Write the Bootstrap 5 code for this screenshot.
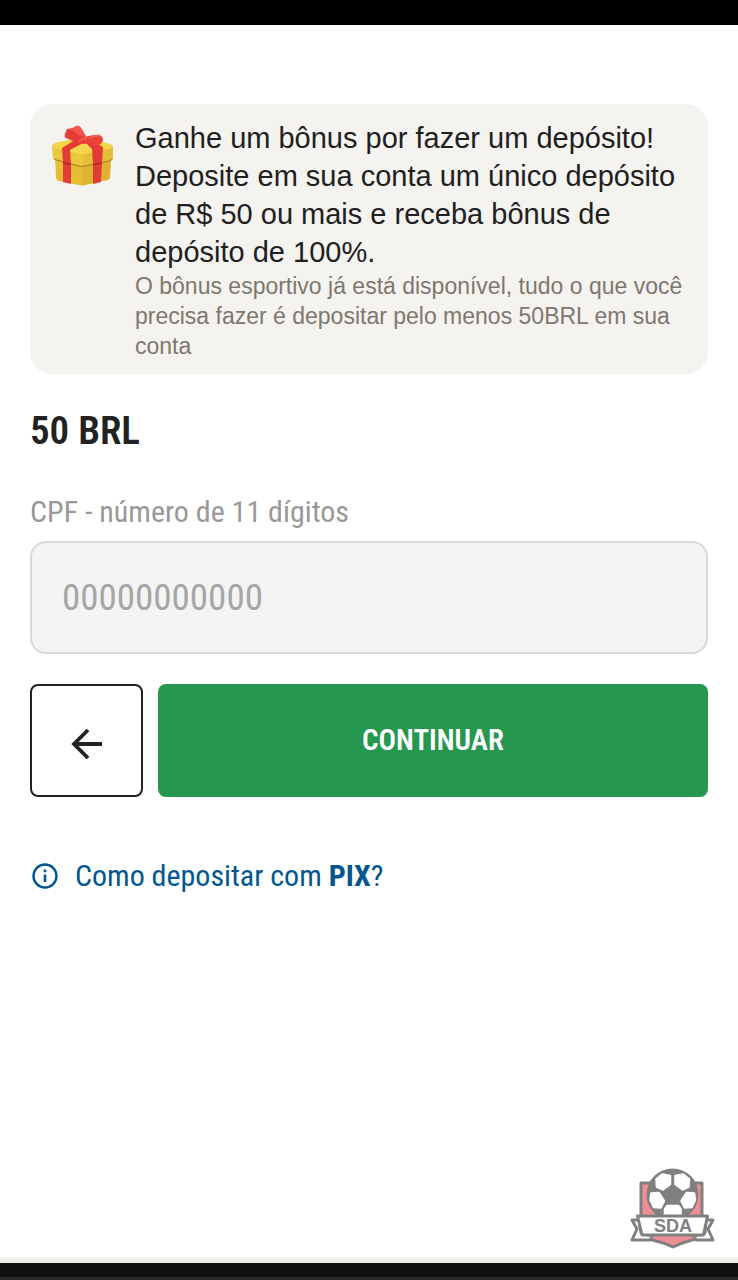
<!DOCTYPE html>
<html lang="pt-BR">
<head>
<meta charset="utf-8">
<meta name="viewport" content="width=device-width, initial-scale=1">
<title>Depósito com PIX</title>
<link rel="stylesheet" href="https://cdn.jsdelivr.net/npm/bootstrap@5.3.0/dist/css/bootstrap.min.css">
<style>
  body { background: #fff; color: #222; font-family: "Roboto Condensed", "Liberation Sans Narrow", Roboto, sans-serif; }
  .top-bar { height: 25px; background: #000; }
  .page-main { padding: 79px 30px 0; }
  .bonus { background: #f4f3f0; border-radius: 22px; padding: 15px 16px 13px 21px; gap: 20px; font-family: "Liberation Sans", Arial, sans-serif; }
  .bonus-icon { width: 64px; height: 64px; margin-top: 5px; }
  .bonus-title { font-size: 29px; line-height: 38px; color: #22201e; }
  .bonus-text { font-size: 23px; line-height: 30px; color: #7f776e; }
  .amount { font-size: 39px; line-height: 48px; font-weight: 600; margin: 33px 0 37px; }
  .cpf-label { font-size: 30px; line-height: 40px; color: #999; margin-bottom: 9px; }
  .cpf-input, .cpf-input:focus { height: 113px; border: 2px solid #d9d9d9; border-radius: 16px; background: #f4f4f4; font-size: 37px; padding: 0 30px; }
  .cpf-input::placeholder { color: #a6a6a6; }
  .actions { gap: 15px; margin-top: 30px; }
  .btn-back { width: 113px; height: 113px; border: 2px solid #222; border-radius: 8px; color: #222; }
  .btn-go { background: #26974f; color: #fff; border: 0; border-radius: 8px; font-size: 29px; line-height: 40px; font-weight: 600; padding-bottom: 8px; }
  .btn-go:hover { background: #1f8444; color: #fff; }
  .help { color: #005792; font-size: 30px; line-height: 40px; gap: 16px; margin-top: 59px; }
  .crest { padding-right: 22px; margin-bottom: 8px; }
  .bottom-line { height: 6px; background: #f1f0ec; }
  .bottom-bar { height: 17px; background: #111; border-bottom: 3px solid #292728; }
</style>
</head>
<body>
<div class="min-vh-100 d-flex flex-column">
  <div class="top-bar"></div>
  <main class="page-main flex-grow-1">
    <section class="bonus d-flex align-items-start">
      <svg class="bonus-icon flex-shrink-0" viewBox="6 6 64 64" aria-hidden="true">
        <path d="M10 38H66L65 58Q65 61 62 62L40 67Q37 68 34 67L14 63Q11 62 11 59Z" fill="#e6bd37"/>
        <path d="M38 44 66 38 65 58Q65 61 62 62L38 67Z" fill="#dfb332"/>
        <path d="M10 25 34 20Q38 19 42 20L65 26Q68 27 68 30V40Q68 42 65 43L40 48Q37 49 34 48L11 42Q8 41 8 39L7 29Q7 26 10 25Z" fill="#ebc83f"/>
        <path d="M38 36 68 29V40Q68 42 65 43L40 48L38 49Z" fill="#e5bd39"/>
        <path d="M8 28Q8 26 10 25L35 20Q38 19 42 20L67 27 66 30 41 36Q38 37 34 36L10 30Z" fill="#f3d64d"/>
        <path d="M9 41 11 42 34 48Q37 49 40 48L65 43 67 41" fill="none" stroke="#b8872b" stroke-width="1.300"/>
        <path d="M17 30 30 22 40 24 25 32 26 46 26 66 18 64V44Z" fill="#e43d36"/>
        <path d="M38 22 48 23 58 29 57 44 56 64 48 66V46L47 31Z" fill="#e23b35"/>
        <path d="M18 44.500 26 46.500M48 47 57 45" stroke="#aa2b27" stroke-width="1.300"/>
        <path d="M38 21 32 25Q26 22 21 20 19 19 20 16L22 11Q28 11 31 8 34 7 36 10L41 18Z" fill="#e63c38"/>
        <path d="M22 11Q28 11 31 8 34 7 36 10L40 18 35 18Q29 12 22 11Z" fill="#f4564f"/>
        <path d="M38 19Q47 17 54 17Q58 18 58 22 57 26 53 27 48 29 44 25 36 27 31 25 32 21 38 19Z" fill="#e94039"/>
        <path d="M44 20Q50 17 55 18M34 23Q38 20 42 20" fill="none" stroke="#f45a50" stroke-width="2"/>
      </svg>
      <div>
        <div class="bonus-title">Ganhe um bônus por fazer um depósito! Deposite em sua conta um único depósito de R$ 50 ou mais e receba bônus de depósito de 100%.</div>
        <div class="bonus-text">O bônus esportivo já está disponível, tudo o que você precisa fazer é depositar pelo menos 50BRL em sua conta</div>
      </div>
    </section>
    <h1 class="amount">50 BRL</h1>
    <form>
      <label for="cpf" class="cpf-label d-block">CPF - número de 11 dígitos</label>
      <input id="cpf" type="text" inputmode="numeric" class="form-control cpf-input" placeholder="00000000000">
      <div class="actions d-flex">
        <button type="button" class="btn btn-back p-0 pt-1 d-flex align-items-center justify-content-center flex-shrink-0" aria-label="Voltar">
          <svg width="32" height="32" viewBox="0 0 32 32" fill="none" stroke="currentColor" stroke-width="3.8" aria-hidden="true"><path d="M17 3 3 17 17 31M3 17H31"/></svg>
        </button>
        <button type="submit" class="btn btn-go flex-grow-1">CONTINUAR</button>
      </div>
    </form>
    <a href="#" class="help d-flex align-items-center text-decoration-none">
      <svg width="29" height="29" viewBox="0 0 29 29" aria-hidden="true"><circle cx="15" cy="14" r="11.5" fill="none" stroke="currentColor" stroke-width="2.4"/><path d="M15 7.500v2.800M15 12.500v7.500" stroke="currentColor" stroke-width="2.6"/></svg>
      <span>Como depositar com <b>PIX</b>?</span>
    </a>
  </main>
  <div class="crest d-flex justify-content-end">
    <svg width="86" height="82" viewBox="11 8 86 82" role="img" aria-label="SDA">
      <g stroke="#808080" stroke-width="3" stroke-linejoin="round">
        <path d="M22 24H83V76Q78 80 70 82Q62 84 54 88Q46 84 37 82Q28 80 22 76Z" fill="#f08f93"/>
        <path d="M20 61H13L18 70 13 81H31L33 77 22 74ZM87 61H94L89 70 94 81H77L75 77 86 74Z" fill="#fff"/>
      </g>
      <circle cx="53.500" cy="35.500" r="26" fill="#808080"/>
      <g fill="#fff" stroke="#fff" stroke-width="1.500" stroke-linejoin="round">
        <path d="M43 15 51.500 16.500V25.500L44 31 37.500 28 37 20Z"/>
        <path d="M64.500 15 56 16.500V25.500L63.500 31 70 28 70.500 20Z"/>
        <path d="M32 34 40 33.500 45.500 42 42 49 34.500 48.500 31 41Z"/>
        <path d="M75.500 34 67.500 33.500 62 42 65.500 49 73 48.500 76.500 41Z"/>
        <path d="M48 46.500H59.500L62 50V56H45.500V50Z"/>
      </g>
      <path d="M18.500 57H88.500L84.500 76H23Z" fill="#fff" stroke="#808080" stroke-width="3" stroke-linejoin="round"/>
      <text x="54" y="73" text-anchor="middle" font-family="Liberation Sans, Arial, sans-serif" font-weight="700" font-size="18" fill="#808080">SDA</text>
    </svg>
  </div>
  <div class="bottom-line"></div>
  <div class="bottom-bar"></div>
</div>
<script src="https://cdn.jsdelivr.net/npm/bootstrap@5.3.0/dist/js/bootstrap.bundle.min.js"></script>
</body>
</html>
